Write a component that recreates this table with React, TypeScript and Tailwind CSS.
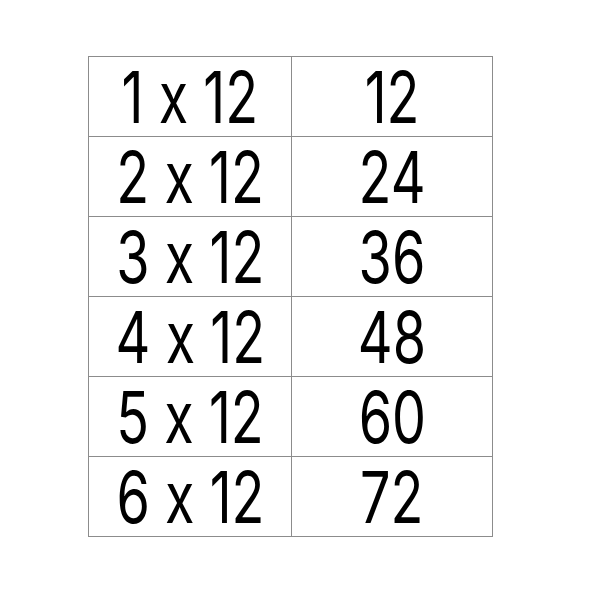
import React from 'react';

const rows = [
  ['1 x 12', '12'],
  ['2 x 12', '24'],
  ['3 x 12', '36'],
  ['4 x 12', '48'],
  ['5 x 12', '60'],
  ['6 x 12', '72'],
];

function Cell({ text, first }: { text: string; first?: boolean }) {
  return (
    <td
      className={`${first ? 'w-[203px]' : ''} border border-[#8c8c8c] p-0 text-center align-middle whitespace-nowrap`}
    >
      <span className="inline-block origin-center scale-x-[0.76] text-[71px] font-normal leading-[64px] proportional-nums [font-feature-settings:'calt'_0]">
        {text}
      </span>
    </td>
  );
}

export default function App() {
  return (
    <div className="w-[600px] h-[601px] bg-white pl-[88px] pt-[56px]">
      <table
        className="border-collapse w-[405px] table-fixed text-black"
        style={{ fontFamily: 'Inter, Lato, sans-serif' }}
      >
        <tbody>
          {rows.map(([q, a]) => (
            <tr key={q} className="h-[80px]">
              <Cell text={q} first />
              <Cell text={a} />
            </tr>
          ))}
        </tbody>
      </table>
    </div>
  );
}
